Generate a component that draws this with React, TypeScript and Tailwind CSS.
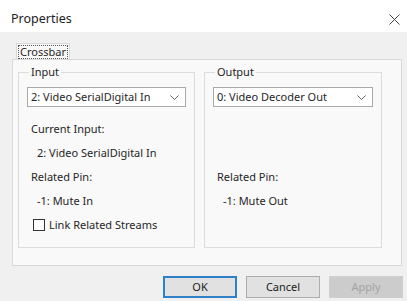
import React from 'react';

const font = { fontFamily: '"Noto Sans", "Segoe UI", Arial, sans-serif' };

function Combo({ value }: { value: string }) {
  return (
    <div className="flex h-[20px] items-center justify-between border border-[#a9a9a9] bg-white pl-[3px] pr-[6px]">
      <span className="truncate">{value}</span>
      <svg width="9" height="5" viewBox="0 0 9 5" className="shrink-0">
        <path d="M0.5 0.5 L4.5 4.5 L8.5 0.5" fill="none" stroke="#606060" strokeWidth="1" />
      </svg>
    </div>
  );
}

function Row({ children, indent = false }: { children?: React.ReactNode; indent?: boolean }) {
  return <div className={`flex h-[24px] items-center ${indent ? 'pl-[10px]' : 'pl-[4px]'}`}>{children}</div>;
}

function Group({ title, children, width }: { title: string; children: React.ReactNode; width: string }) {
  return (
    <fieldset className={`${width} h-[183px] border border-[#dcdcdc] px-[8px] pt-[8px]`}>
      <legend className="ml-[2px] px-[2px] leading-[14px]">{title}</legend>
      {children}
    </fieldset>
  );
}

function Button({ label, variant }: { label: string; variant: 'default' | 'normal' | 'disabled' }) {
  const cls =
    variant === 'default'
      ? 'border-2 border-[#2f7fc9] bg-[#e1e1e1] text-[#1a1a1a]'
      : variant === 'normal'
        ? 'border border-[#adadad] bg-[#e1e1e1] text-[#1a1a1a]'
        : 'border border-[#cfcfcf] bg-[#cccccc] text-[#a3a3a3]';
  return (
    <button className={`flex h-[22px] w-[74px] items-center justify-center ${cls}`}>{label}</button>
  );
}

export default function App() {
  return (
    <div className="flex h-[301px] w-[407px] flex-col bg-[#f0f0f0] text-[11px] text-[#262626]" style={font}>
      <div className="flex h-[32px] items-center justify-between bg-white pl-[11px] pr-[7px]">
        <span className="pt-[7px] text-[12.5px] text-[#222]">Properties</span>
        <svg width="11" height="11" viewBox="0 0 11 11" className="mt-[6px]">
          <path d="M0.5 0.5 L10.5 10.5 M10.5 0.5 L0.5 10.5" stroke="#444" strokeWidth="1" />
        </svg>
      </div>

      <div className="flex flex-col pl-[12px] pr-[5px] pt-[11px]">
        <div className="flex">
          <div className="ml-[4px] flex h-[16px] items-center border border-b-0 border-[#d9d9d9] bg-[#f9f9f9] px-[1px]">
            <span className="border border-dotted border-[#555] px-[1px] leading-[12px]">Crossbar</span>
          </div>
        </div>
        <div className="flex h-[207px] w-[390px] gap-[9px] border border-[#d9d9d9] bg-[#f9f9f9] pl-[5px] pt-[5px]">
          <Group title="Input" width="w-[177px]">
            <Combo value="2: Video SerialDigital In" />
            <div className="mt-[10px] flex flex-col">
              <Row>Current Input:</Row>
              <Row indent>2: Video SerialDigital In</Row>
              <Row>Related Pin:</Row>
              <Row indent>-1: Mute In</Row>
              <div className="flex h-[24px] items-center gap-[4px] pl-[6px]">
                <span className="h-[12px] w-[12px] border border-[#333] bg-white" />
                <span>Link Related Streams</span>
              </div>
            </div>
          </Group>
          <Group title="Output" width="w-[178px]">
            <Combo value="0: Video Decoder Out" />
            <div className="mt-[10px] flex flex-col">
              <Row />
              <Row />
              <Row>Related Pin:</Row>
              <Row indent>-1: Mute Out</Row>
            </div>
          </Group>
        </div>
      </div>

      <div className="flex justify-end gap-[9px] pr-[4px] pt-[10px]">
        <Button label="OK" variant="default" />
        <Button label="Cancel" variant="normal" />
        <Button label="Apply" variant="disabled" />
      </div>
    </div>
  );
}
